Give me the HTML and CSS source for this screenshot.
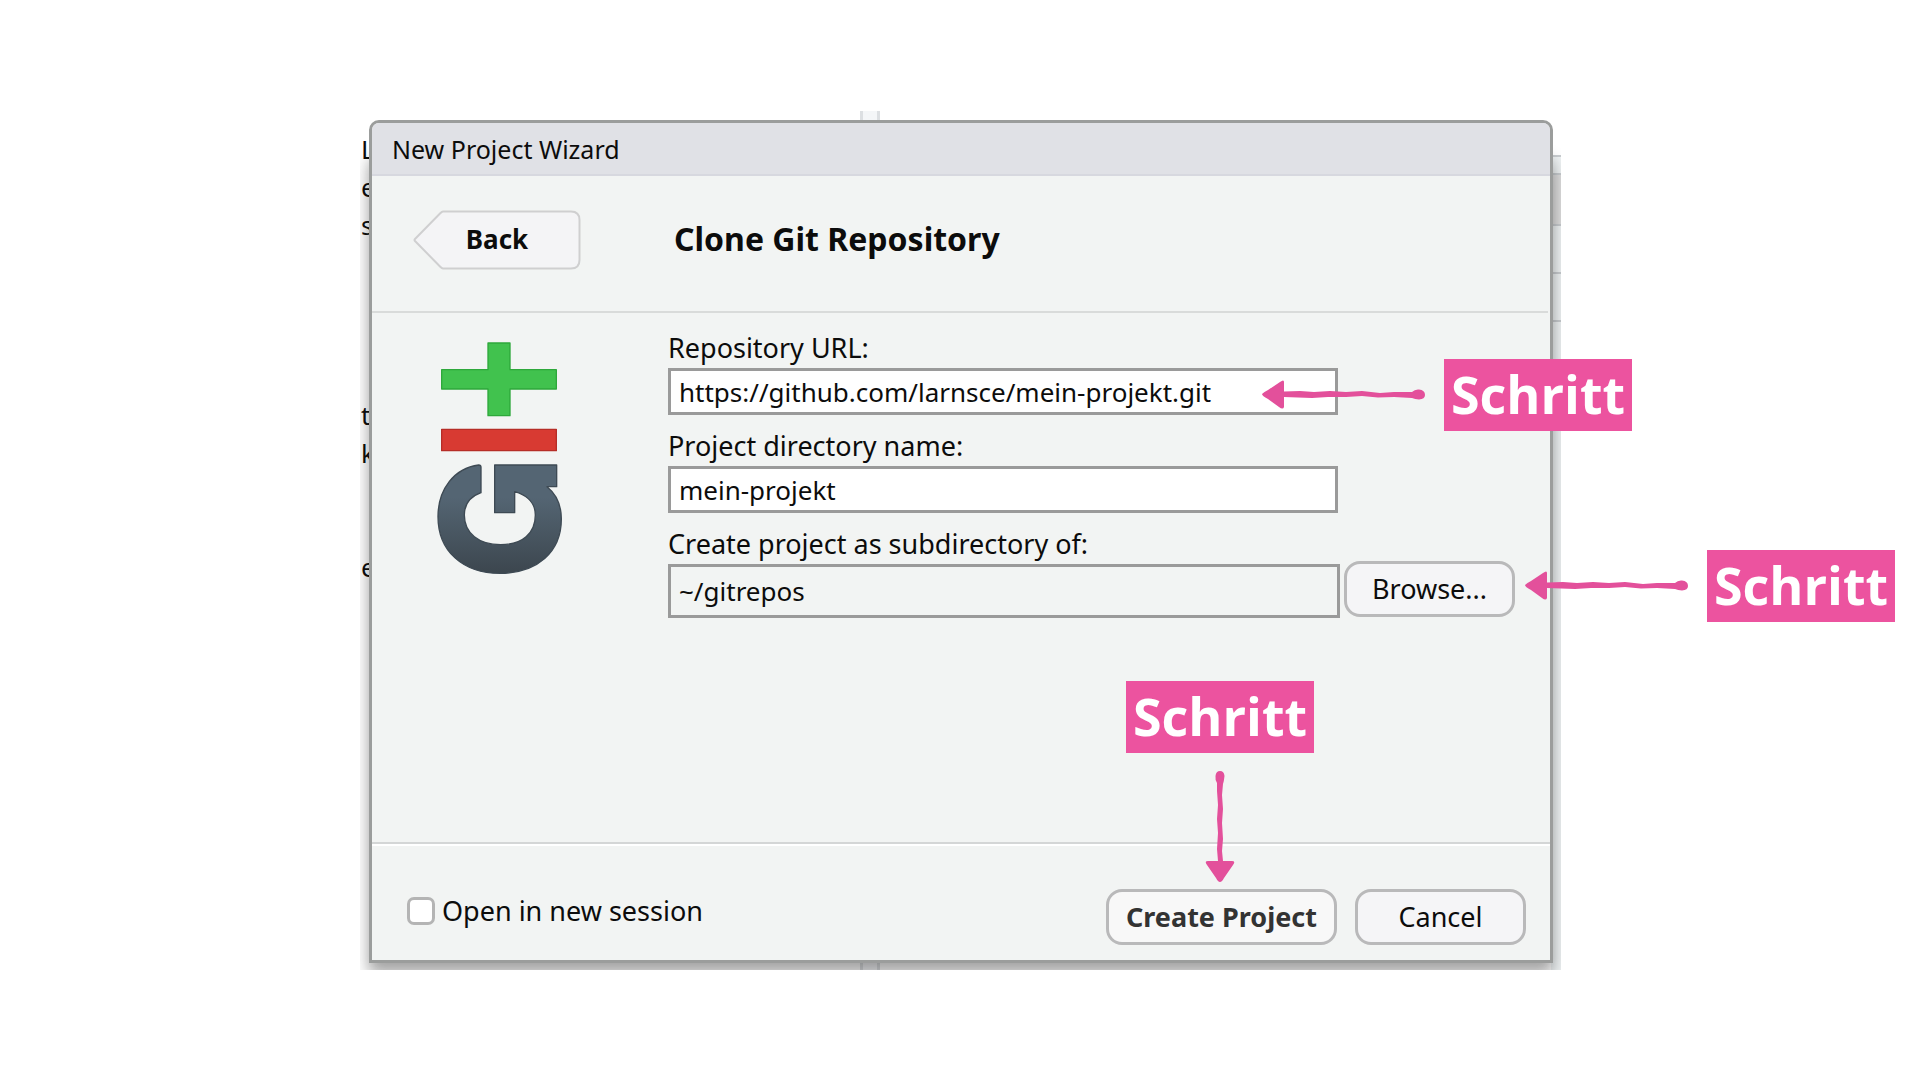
FILE: index.html
```html
<!DOCTYPE html>
<html lang="de">
<head>
<meta charset="utf-8">
<meta name="viewport" content="width=device-width, initial-scale=1">
<title>New Project Wizard</title>
<link rel="stylesheet" href="styles.css">
</head>
<body>
<main class="stage">
  <div class="backdrop" aria-hidden="true">
    <div class="gutter"></div>
    <div class="side-pane"><i></i><i></i><i></i><i></i><i></i></div>
    <div class="shade"></div>
    <div class="editor"><span>L</span><span>e</span><span>s</span><span></span><span></span><span></span><span></span><span>t</span><span>k</span><span></span><span></span><span>e</span></div>
  </div>

  <form class="dialog">
    <div class="titlebar">New Project Wizard</div>

    <header class="head">
      <button type="button" class="back">
        <svg class="back-shape" viewBox="0 0 168 60" aria-hidden="true"><path d="M30 1.500H158Q166.500 1.500 166.500 10V50Q166.500 58.500 158 58.500H30Q29 58.500 27 56.500L2 31Q1 30 2 29L27 3.500Q29 1.500 30 1.500Z" fill="#f4f4f6" stroke="#cfcfd0" stroke-width="2"/></svg>
        <span class="back-text">Back</span>
      </button>
      <h1 class="heading">Clone Git Repository</h1>
    </header>

    <section class="content">
      <svg class="logo" viewBox="255 63 384 702" role="img" aria-label="Git">
        <defs>
          <linearGradient id="slate" x1="0" y1="0" x2="0" y2="1">
            <stop offset=".3" stop-color="#546573"/><stop offset="1" stop-color="#3c464e"/>
          </linearGradient>
        </defs>
        <path d="M411 69H477V149H616V207H477V287H411V207H272V149H411Z" fill="#41c24e" stroke="#2ea83b" stroke-width="4" stroke-linejoin="round"/>
        <path d="M272 328H616V392H272Z" fill="#d83a32" stroke="#b62d27" stroke-width="4" stroke-linejoin="round"/>
        <path d="M390 442V518C357 530 340 553 340 585C340 640 384 674 449 674C514 674 553 640 553 585C553 551 530 526 491 515V578H431V435H617V500H588C617 523 631 558 631 597C631 696 559 760 447 760C335 760 261 693 261 590C261 508 310 444 383 435Q390 435 390 442Z" fill="url(#slate)" stroke="#3e4a54" stroke-width="4" stroke-linejoin="round"/>
      </svg>

      <div class="fields">
        <div class="field">
          <label for="url">Repository URL:</label>
          <div class="control short">
            <input id="url" type="text" value="https://github.com/larnsce/mein-projekt.git">
            <div class="note note-url">
              <svg class="arrow" viewBox="0 0 164 32" aria-hidden="true"><path d="M0 15Q2 13 6 11L18 3Q22 0 22 3V12.500L38 12L52 13L68 12L84 13L100 12L118 14L132 13L150 13Q153 10 157 10.500Q163 11 163 16Q163 20 157 20.500Q153 20 150 19L132 18L116 18.500L100 17L84 18L66 18L50 19L36 18.500L22 18V28Q21 31 17 28L6 20Q0 17 0 15Z"/></svg>
              <span class="tag">Schritt</span>
            </div>
          </div>
        </div>
        <div class="field">
          <label for="name">Project directory name:</label>
          <div class="control short">
            <input id="name" type="text" value="mein-projekt">
          </div>
        </div>
        <div class="field">
          <label for="parent">Create project as subdirectory of:</label>
          <div class="control">
            <input id="parent" class="readonly" type="text" value="~/gitrepos" readonly>
            <button type="button" class="btn browse">Browse...</button>
            <div class="note note-browse">
              <svg class="arrow" viewBox="0 0 164 32" aria-hidden="true"><path d="M0 15Q2 13 6 11L18 3Q22 0 22 3V12.500L38 12L52 13L68 12L84 13L100 12L118 14L132 13L150 13Q153 10 157 10.500Q163 11 163 16Q163 20 157 20.500Q153 20 150 19L132 18L116 18.500L100 17L84 18L66 18L50 19L36 18.500L22 18V28Q21 31 17 28L6 20Q0 17 0 15Z"/></svg>
              <span class="tag">Schritt</span>
            </div>
          </div>
        </div>
      </div>
    </section>

    <footer class="foot">
      <label class="session"><input type="checkbox">Open in new session</label>
      <div class="actions">
        <div class="create-wrap">
          <button type="submit" class="btn create">Create Project</button>
          <div class="note note-create">
            <span class="tag">Schritt</span>
            <svg class="arrow-down" viewBox="0 0 32 111" aria-hidden="true"><path d="M16 0Q20 0 20.500 5Q20 10 19 13L18 24L19 38L18 52L19 68L18 80L19 90L28 90Q32 90 29 94L20 107Q18 111 16 111Q14 111 12 107L3 94Q0 90 4 90L14 90L13 78L14 62L13 48L14 34L13 20L13 12Q11 9 11.500 5Q12 0 16 0Z"/></svg>
          </div>
        </div>
        <button type="button" class="btn cancel">Cancel</button>
      </div>
    </footer>
  </form>
</main>
</body>
</html>
```
FILE: styles.css
```css
* { box-sizing: border-box; }

body {
  margin: 0;
  padding: 111px 0;
  display: grid;
  grid-template-columns: 360fr 1201fr 359fr;
  background: #fff;
  color: #0c0c0c;
  font-family: "Lucida Grande", "Noto Sans", "Open Sans", sans-serif;
  font-size: 26px;
  overflow-x: hidden;
}

.stage {
  grid-column: 2;
  position: relative;
  padding: 9px 8px 7px 9px;
}

/* Slice of the editor window behind the dialog */
.backdrop {
  position: absolute;
  inset: 0;
  overflow: hidden;
}
.shade {
  position: absolute;
  inset: 40px 8px 7px 9px;
  box-shadow: 0 8px 14px rgba(0, 0, 0, .3), 0 16px 16px rgba(0, 0, 0, .1);
}
.gutter {
  position: absolute;
  top: 0;
  bottom: 0;
  left: 500px;
  width: 20px;
  background: #f4f6f8;
  border: solid #dcdfe2;
  border-width: 0 3px;
}
.side-pane {
  position: absolute;
  top: 44px;
  right: 0;
  bottom: 0;
  width: 10px;
  background: #eff3f4;
}
.side-pane i {
  display: block;
  height: 48px;
  border-top: 2px solid #c9cdd0;
}
.side-pane i:nth-child(1) { height: 18px; }
.side-pane i:nth-child(2) { height: 51px; background: #dedede; }
.editor {
  position: absolute;
  top: 19px;
  left: 1px;
  width: 10px;
  overflow: hidden;
  line-height: 38px;
}
.editor span { display: block; height: 38px; }

.dialog {
  position: relative;
  display: flex;
  flex-direction: column;
  min-height: 843px;
  border: 3px solid #9b9d9c;
  border-radius: 10px 10px 0 0;
  background: #f2f4f3;
}

.titlebar {
  height: 53px;
  padding: 0 20px;
  border-bottom: 2px solid #d7d8df;
  border-radius: 7px 7px 0 0;
  background: #e0e1e6;
  font-size: 25px;
  line-height: 52px;
}

.head {
  display: flex;
  align-items: center;
  gap: 93px;
  height: 137px;
  margin-right: 2px;
  padding: 0 40px 8px 41px;
  border-bottom: 2px solid #d9dbda;
}
.heading {
  margin: 0;
  font-size: 32px;
  font-weight: 700;
  line-height: 60px;
  padding-bottom: 2px;
}
.back {
  display: grid;
  width: 168px;
  height: 60px;
  padding: 0;
  border: 0;
  background: none;
  color: inherit;
  font: 700 26px/58px "Lucida Grande", "Noto Sans", "Open Sans", sans-serif;
}
.back-shape, .back-text { grid-area: 1 / 1; }
.back-text { text-align: center; }

.content {
  flex: 1;
  display: flex;
  align-items: flex-start;
  gap: 104px;
  padding: 19px 35px 0 64px;
}
.logo {
  flex: none;
  width: 128px;
  height: 234px;
  margin-top: 9px;
}
.fields {
  flex: 1;
  display: flex;
  flex-direction: column;
  gap: 15px;
}
.field {
  display: flex;
  flex-direction: column;
  gap: 4px;
}
.field label {
  font-size: 27px;
  line-height: 32px;
}
.control {
  position: relative;
  display: flex;
  align-items: flex-start;
  gap: 4px;
}
.short { margin-right: 177px; }
.control input {
  flex: 1;
  min-width: 0;
  height: 47px;
  padding: 0 8px;
  border: 3px solid #9a9a9a;
  border-radius: 0;
  outline: 0;
  background: #fff;
  color: inherit;
  font: inherit;
}
.control .readonly {
  height: 54px;
  background: #f2f4f3;
}

.btn {
  height: 56px;
  padding: 0;
  border: 3px solid #b9b9ba;
  border-radius: 16px;
  background: #f5f5f7;
  color: inherit;
  font: 27px/48px "Lucida Grande", "Noto Sans", "Open Sans", sans-serif;
}
.browse {
  width: 171px;
  margin-top: -3px;
}
.cancel { width: 171px; }
.create {
  width: 231px;
  background: #f8f8f8;
  color: #333;
  font-weight: 700;
}

.foot {
  display: flex;
  align-items: center;
  justify-content: space-between;
  height: 118px;
  padding: 30px 24px 0 35px;
  border-top: 2px solid #d4d6d6;
  box-shadow: inset 0 2px #fff;
}
.session {
  display: flex;
  align-items: center;
  gap: 7px;
  padding-bottom: 12px;
  font-size: 27px;
  line-height: 32px;
}
.session input {
  appearance: none;
  width: 28px;
  height: 28px;
  margin: 0;
  border: 3px solid #b4b4b4;
  border-radius: 7px;
  background: #fff;
}
.actions {
  display: flex;
  gap: 18px;
}
.create-wrap { position: relative; }

/* Step markers pinned to the control they explain */
.note {
  position: absolute;
  display: flex;
  align-items: center;
  gap: 18px;
  fill: #e3509b;
}
.note-url { left: calc(100% - 76px); top: -9px; }
.note-browse { left: calc(100% + 10px); top: -14px; }
.note-create { left: 20px; bottom: 63px; flex-direction: column; }
.arrow { flex: none; width: 164px; height: 32px; }
.arrow-down { width: 32px; height: 111px; }
.tag {
  width: 188px;
  height: 72px;
  background: #ec539f;
  color: #fff;
  font: 700 52px/70px Chalkduster, "Open Sans", sans-serif;
  text-align: center;
}
```
